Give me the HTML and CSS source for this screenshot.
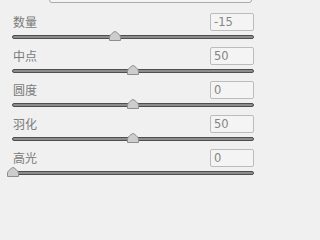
FILE: index.html
```html
<!DOCTYPE html>
<html lang="zh">
<head>
<meta charset="utf-8">
<link rel="stylesheet" href="styles.css">
</head>
<body>
<div class="panel">
  <div class="topbox"></div>
  <div class="rows">
    <div class="row">
      <div class="head"><span class="label">数量</span><input class="num" value="-15"></div>
      <div class="slider"><div class="track"></div><svg class="thumb" style="left:42.5%" viewBox="0 0 12 10"><path d="M6 0.5 C7 0.5 11.5 4 11.5 6 L11.5 9.5 L0.5 9.5 L0.5 6 C0.5 4 5 0.5 6 0.5 Z"/></svg></div>
    </div>
    <div class="row">
      <div class="head"><span class="label">中点</span><input class="num" value="50"></div>
      <div class="slider"><div class="track"></div><svg class="thumb" style="left:50%" viewBox="0 0 12 10"><path d="M6 0.5 C7 0.5 11.5 4 11.5 6 L11.5 9.5 L0.5 9.5 L0.5 6 C0.5 4 5 0.5 6 0.5 Z"/></svg></div>
    </div>
    <div class="row">
      <div class="head"><span class="label">圆度</span><input class="num" value="0"></div>
      <div class="slider"><div class="track"></div><svg class="thumb" style="left:50%" viewBox="0 0 12 10"><path d="M6 0.5 C7 0.5 11.5 4 11.5 6 L11.5 9.5 L0.5 9.5 L0.5 6 C0.5 4 5 0.5 6 0.5 Z"/></svg></div>
    </div>
    <div class="row">
      <div class="head"><span class="label">羽化</span><input class="num" value="50"></div>
      <div class="slider"><div class="track"></div><svg class="thumb" style="left:50%" viewBox="0 0 12 10"><path d="M6 0.5 C7 0.5 11.5 4 11.5 6 L11.5 9.5 L0.5 9.5 L0.5 6 C0.5 4 5 0.5 6 0.5 Z"/></svg></div>
    </div>
    <div class="row">
      <div class="head"><span class="label">高光</span><input class="num" value="0"></div>
      <div class="slider"><div class="track"></div><svg class="thumb" style="left:0.4%" viewBox="0 0 12 10"><path d="M6 0.5 C7 0.5 11.5 4 11.5 6 L11.5 9.5 L0.5 9.5 L0.5 6 C0.5 4 5 0.5 6 0.5 Z"/></svg></div>
    </div>
  </div>
</div>
</body>
</html>
```

FILE: styles.css
```css
html, body {
  margin: 0;
  padding: 0;
  background: #f0f0f0;
  width: 274px;
  height: 220px;
  overflow: hidden;
}
.panel {
  padding: 0 20px 0 12px;
  font-family: "Liberation Sans", "Noto Sans CJK SC", sans-serif;
}
.topbox {
  margin: -17px 2px 0 37px;
  height: 18px;
  border: 1px solid #a9a9a9;
  border-radius: 3px;
  background: #f4f4f4;
}
.rows {
  margin-top: 10px;
  display: flex;
  flex-direction: column;
}
.row {
  height: 34px;
  display: flex;
  flex-direction: column;
}
.head {
  height: 18px;
  display: flex;
  align-items: center;
  justify-content: space-between;
}
.label {
  padding-left: 1px;
  font-family: "Noto Sans CJK SC", sans-serif;
  font-size: 12px;
  line-height: 12px;
  color: #7a7a7a;
}
.num {
  box-sizing: border-box;
  width: 44px;
  height: 18px;
  margin: 0;
  padding: 0 3px;
  border: 1px solid #bcbcbc;
  border-radius: 2px;
  background: #f4f4f4;
  font-family: "DejaVu Sans", sans-serif;
  font-size: 11.5px;
  color: #858585;
  outline: none;
}
.slider {
  position: relative;
  height: 16px;
}
.track {
  box-sizing: border-box;
  margin-top: 4px;
  height: 4px;
  border: 1px solid #4e4e4e;
  border-radius: 2px;
  background: #8c8c8c;
}
.thumb {
  position: absolute;
  top: 0;
  width: 12px;
  height: 10px;
  margin-left: -6px;
  fill: #cdcdcd;
  stroke: #8e8e8e;
  stroke-width: 1;
}
```
